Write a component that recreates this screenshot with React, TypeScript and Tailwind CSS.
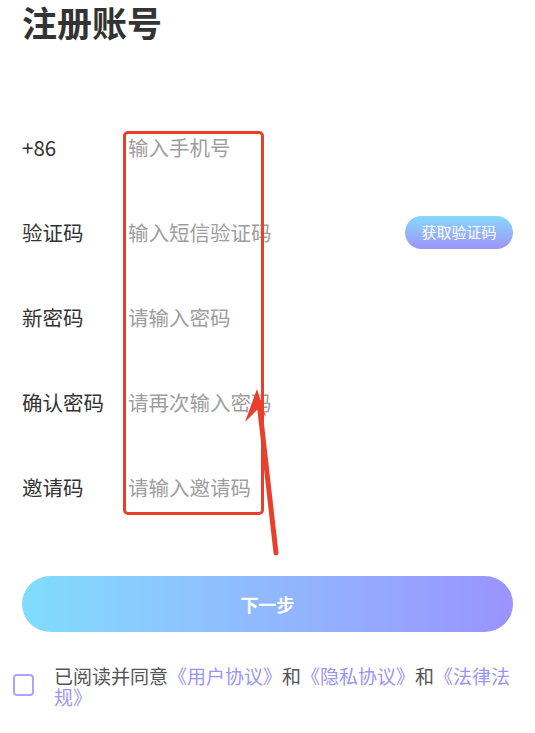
const rows = [
  { label: "+86", placeholder: "输入手机号" },
  { label: "验证码", placeholder: "输入短信验证码", code: true },
  { label: "新密码", placeholder: "请输入密码" },
  { label: "确认密码", placeholder: "请再次输入密码" },
  { label: "邀请码", placeholder: "请输入邀请码" },
]

export default function App() {
  return (
    <main
      className="relative min-h-[733px] w-[535px] overflow-hidden bg-white"
      style={{ fontFamily: '"Noto Sans CJK SC", "Noto Sans", sans-serif' }}
    >
      <div className="px-[22px]">
        <h1 className="h-[44px] text-[35px] font-bold leading-[44px] text-[#333]">注册账号</h1>

        <div className="mt-[61px]">
          {rows.map((row) => (
            <div key={row.label} className="flex h-[85px] items-center">
              <span className="w-[106px] shrink-0 text-[20.5px] text-[#333]">{row.label}</span>
              <input
                className="min-w-0 flex-1 bg-transparent text-[20.5px] text-[#333] outline-none placeholder:text-[#9e9e9e]"
                placeholder={row.placeholder}
              />
              {row.code && (
                <button className="h-[33px] w-[108px] shrink-0 rounded-full bg-gradient-to-b from-[#86d8fb] to-[#9a94f8] text-[15px] text-white">
                  获取验证码
                </button>
              )}
            </div>
          ))}
        </div>

        <button className="mt-[46px] h-[56px] w-full rounded-full bg-gradient-to-r from-[#80dcfc] to-[#9993fe] text-[18px] font-bold text-white">
          下一步
        </button>
      </div>

      <div className="mt-[33px] flex items-start pl-[13px] pr-[12px]">
        <span className="mt-[9px] h-[22px] w-[21px] shrink-0 rounded-[4px] border-2 border-[#a9a6f6]" />
        <p className="ml-[20px] text-[19px] leading-[21px] text-[#555]">
          已阅读并同意<span className="text-[#9a96f2]">《用户协议》</span>和<span className="text-[#9a96f2]">《隐私协议》</span>和<span className="text-[#9a96f2]">《法律法规》</span>
        </p>
      </div>

      {/* annotation */}
      <div className="pointer-events-none absolute left-[123px] top-[131px] h-[384px] w-[141px] rounded-[5px] border-[3px] border-[#e8402a]" />
      <svg className="pointer-events-none absolute left-0 top-0" width="535" height="733" viewBox="0 0 535 733">
        <line x1="276" y1="553" x2="259" y2="402" stroke="#e8402a" strokeWidth="5" strokeLinecap="round" />
        <polygon points="257,389 245,422 259,408 266,417" fill="#e8402a" />
      </svg>
    </main>
  )
}
